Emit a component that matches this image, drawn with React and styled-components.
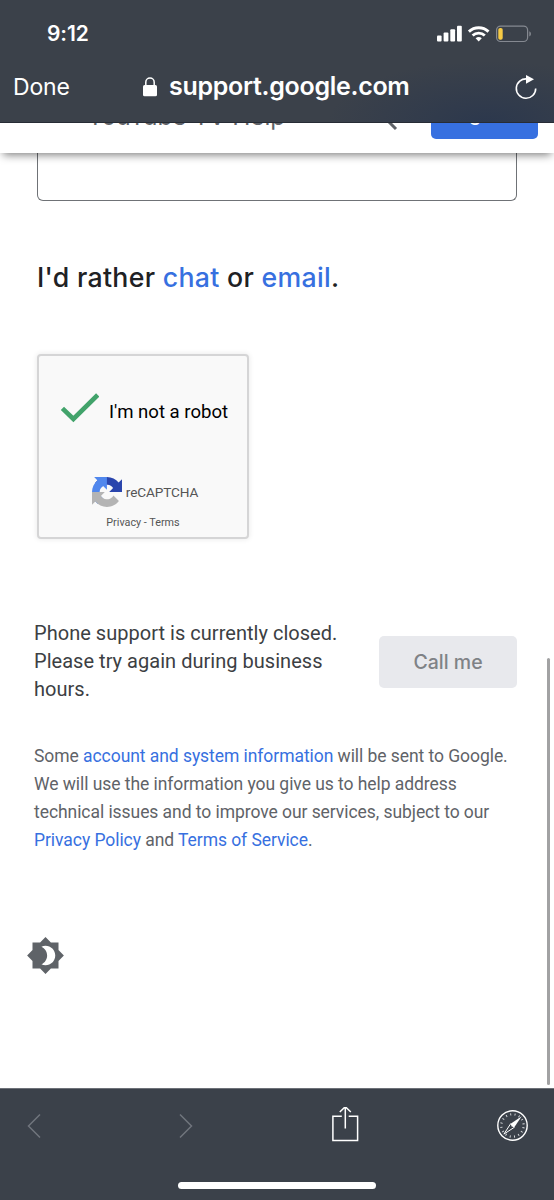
import React from 'react';
import styled, { createGlobalStyle } from 'styled-components';
import { MdBrightness4 } from 'react-icons/md';

const GlobalStyle = createGlobalStyle`
  * {
    box-sizing: border-box;
  }
  body {
    margin: 0;
    background: white;
    font-family: Roboto, sans-serif;
  }
`;

const Phone = styled.div`
  position: relative;
  display: flex;
  flex-direction: column;
  width: 554px;
  height: 1200px;
  overflow: hidden;
  background: white;
`;

const BrowserTop = styled.header`
  position: relative;
  z-index: 2;
  flex: none;
  height: 123px;
  border-bottom: 1px solid #272c35;
  color: white;
  font-family: Inter, sans-serif;
  background:
    radial-gradient(ellipse 160px 62px at 488px 123px, #2c384d 0%, rgba(44, 56, 77, 0) 100%),
    #3b414a;
`;

const StatusBar = styled.div`
  display: flex;
  align-items: center;
  justify-content: space-between;
  height: 50px;
  padding: 17px 22px 0 47px;
`;

const Clock = styled.span`
  font-size: 21px;
  font-weight: 600;
  line-height: 24px;
  letter-spacing: -0.1px;
`;

const AddressBar = styled.div`
  display: flex;
  align-items: center;
  height: 73px;
  padding: 0 16px 0 13px;
`;

const Done = styled.span`
  width: 130px;
  font-size: 23px;
  letter-spacing: -0.15px;
  white-space: nowrap;
`;

const Address = styled.span`
  flex: 1;
  padding: 0 0 2px 12px;
  font-size: 25px;
  font-weight: 600;
  letter-spacing: -0.3px;
  white-space: nowrap;
`;

const SiteHeader = styled.div`
  position: relative;
  z-index: 1;
  flex: none;
  display: flex;
  align-items: flex-end;
  height: 30px;
  padding: 0 16px 14px 87px;
  background: white;
  box-shadow: 0 5px 8px -3px rgba(0, 0, 0, 0.5);
`;

const SiteTitle = styled.span`
  width: 296px;
  margin-bottom: 8px;
  color: #5f6368;
  font-family: Inter, sans-serif;
  font-size: 24.5px;
  line-height: 30px;
  letter-spacing: -0.15px;
  white-space: nowrap;
`;

const SearchIcon = styled.svg`
  flex: none;
  width: 30px;
  height: 30px;
  margin: 0 18px 5px -12px;
`;

const SignIn = styled.span`
  flex: none;
  width: 107px;
  height: 46px;
  margin-left: auto;
  padding-right: 3px;
  border-radius: 5px;
  background: #3770e0;
  color: white;
  font-family: Inter, sans-serif;
  font-size: 19px;
  font-weight: 500;
  line-height: 43px;
  text-align: center;
`;

const Content = styled.main`
  flex: 1;
  display: flex;
  flex-direction: column;
  align-items: flex-start;
  padding: 0 37px 0 34px;
`;

const TextBox = styled.div`
  align-self: stretch;
  height: 48px;
  margin-left: 3px;
  border: 1px solid #6f7276;
  border-top: 0;
  border-radius: 0 0 6px 6px;
`;

const Heading = styled.h2`
  margin: 58px 0 0 3px;
  color: #202124;
  font-family: Inter, sans-serif;
  font-size: 26.7px;
  font-weight: 500;
  line-height: 36px;
  letter-spacing: 0.3px;
  white-space: nowrap;
`;

const Link = styled.a`
  color: #3770e0;
`;

const Captcha = styled.section`
  display: flex;
  flex-direction: column;
  align-items: center;
  width: 212px;
  height: 185px;
  margin: 59px 0 0 3px;
  border: 2px solid #d5d5d6;
  border-radius: 4px;
  background: #f9f9f9;
  box-shadow: 0 0 5px 1px rgba(0, 0, 0, 0.07);
`;

const CheckRow = styled.div`
  display: flex;
  align-items: center;
  gap: 10px;
  width: 100%;
  height: 32px;
  margin-top: 36px;
  padding-left: 21px;
  font-size: 18.6px;
  white-space: nowrap;

  span {
    padding-top: 8px;
  }
`;

const Brand = styled.div`
  display: flex;
  align-items: center;
  gap: 4px;
  height: 30px;
  margin-top: 53px;
  padding-left: 4px;
  color: #555;
  font-size: 13.6px;
  letter-spacing: -0.12px;

  span {
    padding-bottom: 1px;
  }
`;

const Legal = styled.div`
  margin-top: 8px;
  color: #555;
  font-size: 10.8px;
  line-height: 16px;
`;

const SupportRow = styled.section`
  display: flex;
  align-items: flex-start;
  align-self: stretch;
  justify-content: space-between;
  margin-top: 80px;
`;

const SupportText = styled.p`
  margin: 0;
  color: #3c4043;
  font-size: 20px;
  line-height: 28px;
  letter-spacing: 0.03px;
  white-space: nowrap;
`;

const CallButton = styled.button`
  width: 138px;
  height: 52px;
  margin-top: 17px;
  padding: 0;
  border: 0;
  border-radius: 5px;
  background: #e8e9ed;
  color: #7f8286;
  font-family: Inter, sans-serif;
  font-size: 19.5px;
  font-weight: 500;
`;

const Disclaimer = styled.p`
  margin: 39px 0 0;
  color: #5f6368;
  font-size: 17.5px;
  line-height: 28px;
  letter-spacing: -0.06px;
  white-space: nowrap;
`;

const ThemeIcon = styled(MdBrightness4)`
  width: 39px;
  height: 39px;
  margin: 82px 0 0 -8px;
  color: #5f6368;
`;

const ScrollThumb = styled.div`
  position: absolute;
  top: 658px;
  right: 4px;
  width: 3px;
  height: 427px;
  border-radius: 2px;
  background: #a2a2a3;
`;

const BrowserBottom = styled.footer`
  flex: none;
  display: flex;
  flex-direction: column;
  align-items: center;
  height: 112px;
  border-top: 1px solid #6d7178;
  background: #3b414a;
`;

const Toolbar = styled.nav`
  display: flex;
  align-items: center;
  justify-content: space-between;
  width: 100%;
  height: 74px;
  padding: 0 25px 0 27px;
`;

const HomeIndicator = styled.div`
  width: 198px;
  height: 7px;
  margin-top: 19px;
  border-radius: 4px;
  background: white;
`;

const StatusIcons = () => (
  <svg width="96" height="18" viewBox="436 24.5 96 18">
    <g fill="white">
      <rect x="437" y="35" width="4.6" height="6" rx="1" />
      <rect x="443.6" y="32" width="4.8" height="9" rx="1" />
      <rect x="450.3" y="28.7" width="4.8" height="12.3" rx="1" />
      <rect x="457" y="25.3" width="4.8" height="15.7" rx="1" />
      <path d="M478.7 41l-3.1-3.2a4.7 4.7 0 0 1 6.2 0z" />
    </g>
    <g fill="none" stroke="white" strokeWidth="2.9">
      <path d="M468.9 31.1a14.4 14.4 0 0 1 19.6 0" />
      <path d="M472.6 35a9 9 0 0 1 12.2 0" />
    </g>
    <rect x="496.6" y="25.6" width="31" height="15.4" rx="4" fill="none" stroke="#858991" strokeWidth="1.2" />
    <rect x="498.3" y="27.4" width="4.4" height="11.8" rx="1.8" fill="#f6ca45" />
    <path d="M529.3 30.8v5.2q1.7-.7 1.7-2.6t-1.7-2.6z" fill="#858991" />
  </svg>
);

const LockIcon = () => (
  <svg width="14" height="20" viewBox="0 0 14 20">
    <rect x="0" y="8" width="14" height="11.3" rx="1.6" fill="white" />
    <path d="M2.8 8.5V5.2a4.2 4.2 0 0 1 8.4 0v3.3" fill="none" stroke="white" strokeWidth="1.5" />
  </svg>
);

const ReloadIcon = () => (
  <svg width="24" height="26" viewBox="514 74 24 26">
    <path d="M527 78.9a9.7 9.7 0 1 0 8.7 9.6" fill="none" stroke="white" strokeWidth="1.6" />
    <path d="M526 75l8 4.3-8 4.4z" fill="white" />
  </svg>
);

const CheckIcon = () => (
  <svg width="39" height="30" viewBox="60 392 39 30">
    <path d="M62.4 407.3l11 10.7 24.3-24" fill="none" stroke="#42a36b" strokeWidth="4.6" />
  </svg>
);

const RecaptchaLogo = () => (
  <svg width="30" height="30" viewBox="0 0 64 64">
    <path
      fill="#2a45ad"
      d="M64 31.955l-.033-1.37V4.687l-7.16 7.16C50.948 4.674 42.033.093 32.05.093c-10.4 0-19.622 4.96-25.458 12.64l11.736 11.86a15.55 15.55 0 0 1 4.754-5.334c2.05-1.6 4.952-2.906 8.968-2.906.485 0 .86.057 1.135.163 4.976.393 9.288 3.14 11.828 7.124l-8.307 8.307L64 31.953"
    />
    <path
      fill="#5087ed"
      d="M31.862.094l-1.37.033H4.594l7.16 7.16C4.58 13.147 0 22.06 0 32.046c0 10.4 4.96 19.622 12.64 25.458L24.5 45.768a15.55 15.55 0 0 1-5.334-4.754c-1.6-2.05-2.906-4.952-2.906-8.968 0-.485.057-.86.163-1.135.393-4.976 3.14-9.288 7.124-11.828l8.307 8.307L31.86.095"
    />
    <path
      fill="#b4b4b4"
      d="M.001 32.045l.033 1.37v25.898l7.16-7.16c5.86 7.173 14.774 11.754 24.76 11.754 10.4 0 19.622-4.96 25.458-12.64l-11.736-11.86a15.55 15.55 0 0 1-4.754 5.334c-2.05 1.6-4.952 2.906-8.968 2.906-.485 0-.86-.057-1.135-.163-4.976-.393-9.288-3.14-11.828-7.124l8.307-8.307c-10.522.04-22.4.066-27.295-.005"
    />
  </svg>
);

const Chevron = ({ d }) => (
  <svg width="14" height="26" viewBox="0 0 14 26">
    <path d={d} fill="none" stroke="#70757d" strokeWidth="1.5" />
  </svg>
);

const ShareIcon = () => (
  <svg width="28" height="38" viewBox="331 1107 28 38">
    <g fill="none" stroke="white" strokeWidth="1.5">
      <path d="M341.8 1116.2h-8.9v24.3h24.7v-24.3h-8.9" />
      <path d="M345.3 1128.5V1107M339.8 1112l5.5-5.3 5.5 5.3" />
    </g>
  </svg>
);

const CompassIcon = () => (
  <svg width="32" height="32" viewBox="-15.5 -15.5 32 32">
    <circle r="14.7" fill="none" stroke="white" strokeWidth="1.4" />
    <circle r="11.2" fill="none" stroke="#dfe1e4" strokeWidth="2.2" strokeDasharray="0.9 3.498" strokeDashoffset="-1.8" />
    <path d="M9.2-9.2L1.8 1.8-1.8-1.8z" fill="white" />
    <path d="M1.8 1.8L-8.6 8.6-1.8-1.8z" fill="#3b414a" stroke="white" strokeWidth="1" />
    <circle r="1.2" fill="white" />
  </svg>
);

const App = () => (
  <>
    <GlobalStyle />
    <Phone>
      <BrowserTop>
        <StatusBar>
          <Clock>9:12</Clock>
          <StatusIcons />
        </StatusBar>
        <AddressBar>
          <Done>Done</Done>
          <LockIcon />
          <Address>support.google.com</Address>
          <ReloadIcon />
        </AddressBar>
      </BrowserTop>
      <SiteHeader>
        <SiteTitle>YouTube TV Help</SiteTitle>
        <SearchIcon viewBox="0 0 30 30">
          <circle cx="10" cy="10" r="7" fill="none" stroke="#5f6368" strokeWidth="2.4" />
          <path d="M15 15l10 10" stroke="#5f6368" strokeWidth="3" />
        </SearchIcon>
        <SignIn>Sign in</SignIn>
      </SiteHeader>
      <Content>
        <TextBox />
        <Heading>
          I'd rather <Link>chat</Link> or <Link>email</Link>.
        </Heading>
        <Captcha>
          <CheckRow>
            <CheckIcon />
            <span>I'm not a robot</span>
          </CheckRow>
          <Brand>
            <RecaptchaLogo />
            <span>reCAPTCHA</span>
          </Brand>
          <Legal>Privacy - Terms</Legal>
        </Captcha>
        <SupportRow>
          <SupportText>
            Phone support is currently closed.
            <br />
            Please try again during business
            <br />
            hours.
          </SupportText>
          <CallButton>Call me</CallButton>
        </SupportRow>
        <Disclaimer>
          Some <Link>account and system information</Link> will be sent to Google.
          <br />
          We will use the information you give us to help address
          <br />
          technical issues and to improve our services, subject to our
          <br />
          <Link>Privacy Policy</Link> and <Link>Terms of Service</Link>.
        </Disclaimer>
        <ThemeIcon />
      </Content>
      <BrowserBottom>
        <Toolbar>
          <Chevron d="M13 1.5L1.5 13 13 24.5" />
          <Chevron d="M1 1.5L12.5 13 1 24.5" />
          <ShareIcon />
          <CompassIcon />
        </Toolbar>
        <HomeIndicator />
      </BrowserBottom>
      <ScrollThumb />
    </Phone>
  </>
);

export default App;
